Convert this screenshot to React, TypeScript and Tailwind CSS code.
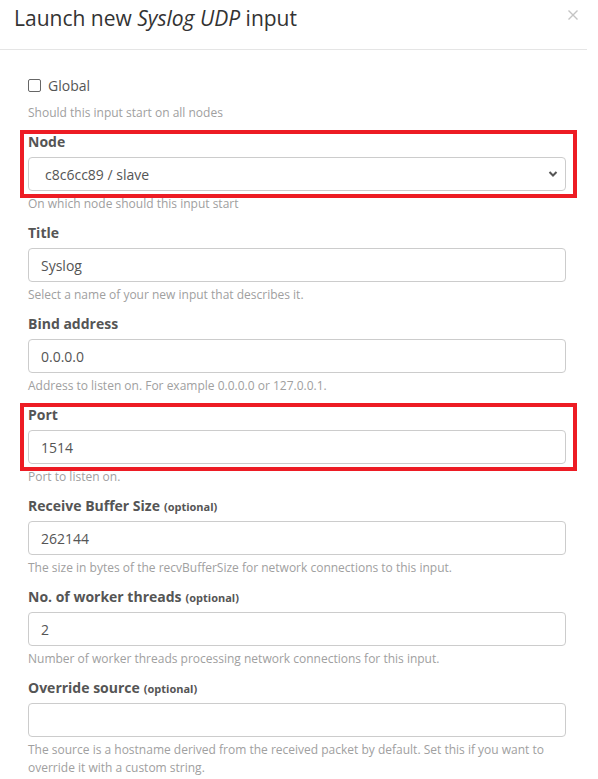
import React from "react";

interface FieldProps {
  label: string;
  optional?: boolean;
  value: string;
  help: React.ReactNode;
  select?: boolean;
  marked?: boolean;
}

function Field({ label, optional, value, help, select, marked }: FieldProps) {
  return (
    <div className="mb-[10px]">
      <div className="relative">
        {marked && (
          <div className="absolute -top-[2px] -left-[8px] -right-[11px] -bottom-[7px] border-4 border-[#ed1c24] pointer-events-none" />
        )}
        <div className="h-[20px] text-[14px] leading-[20px] font-bold text-[#555] mb-[5px]">
          {label}
          {optional && (
            <span className="text-[11px] leading-none font-bold ml-[4px]">(optional)</span>
          )}
        </div>
        <div
          className={`h-[34px] border border-[#ccc] rounded-[4px] flex items-center justify-between text-[14px] text-[#555] ${
            select ? "pl-[16px] pr-[7px]" : "pl-[12px]"
          }`}
        >
          <span>{value}</span>
          {select && (
            <svg width="10" height="8" viewBox="0 0 10 8">
              <path
                d="M1.5 2 L5 5.5 L8.5 2"
                fill="none"
                stroke="#555"
                strokeWidth="2"
              />
            </svg>
          )}
        </div>
      </div>
      <div className="mt-[4px] text-[12px] leading-[18px] text-[#a0a0a0]">
        {help}
      </div>
    </div>
  );
}

export default function App() {
  return (
    <div className="w-[598px] h-[779px] bg-white overflow-hidden font-['Open_Sans',sans-serif]">
      {/* Header */}
      <div className="w-[587px] h-[50px] border-b border-[#e5e5e5] flex items-start justify-between pl-[14px] pr-[9px]">
        <h1 className="text-[21px] leading-[28px] mt-[4px] text-[#333]">
          Launch new <em>Syslog UDP</em> input
        </h1>
        <svg width="10" height="10" viewBox="0 0 10 10" className="mt-[10px]">
          <path d="M0.5 0.5 L9.5 9.5 M9.5 0.5 L0.5 9.5" stroke="#c4c4c4" strokeWidth="1.4" />
        </svg>
      </div>

      {/* Body */}
      <div className="w-[538px] ml-[28px] pt-[25px]">
        <label className="flex items-center h-[20px] text-[14px] text-[#555]">
          <span className="w-[13px] h-[13px] border border-[#666] rounded-[2px] mr-[7px]" />
          Global
        </label>
        <div className="mt-[9px] text-[12px] leading-[18px] text-[#a0a0a0] mb-[10px]">
          Should this input start on all nodes
        </div>

        <Field
          label="Node"
          value="c8c6cc89 / slave"
          select
          marked
          help="On which node should this input start"
        />
        <Field
          label="Title"
          value="Syslog"
          help="Select a name of your new input that describes it."
        />
        <Field
          label="Bind address"
          value="0.0.0.0"
          help="Address to listen on. For example 0.0.0.0 or 127.0.0.1."
        />
        <Field label="Port" value="1514" marked help="Port to listen on." />
        <Field
          label="Receive Buffer Size"
          optional
          value="262144"
          help="The size in bytes of the recvBufferSize for network connections to this input."
        />
        <Field
          label="No. of worker threads"
          optional
          value="2"
          help="Number of worker threads processing network connections for this input."
        />
        <Field
          label="Override source"
          optional
          value=""
          help="The source is a hostname derived from the received packet by default. Set this if you want to override it with a custom string."
        />
      </div>
    </div>
  );
}
